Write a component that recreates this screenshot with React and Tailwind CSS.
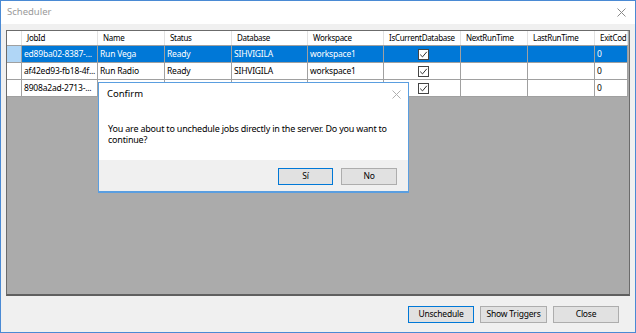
import React from "react";

const cols = [
  { name: "JobId", w: 76 },
  { name: "Name", w: 67 },
  { name: "Status", w: 67 },
  { name: "Database", w: 76 },
  { name: "Workspace", w: 76 },
  { name: "IsCurrentDatabase", w: 77, center: true },
  { name: "NextRunTime", w: 67 },
  { name: "LastRunTime", w: 67 },
  { name: "ExitCod", w: 33 },
];

const rows = [
  ["ed89ba02-8387-...", "Run Vega", "Ready", "SIHVIGILA", "workspace1", true, "", "", "0"],
  ["af42ed93-fb18-4f...", "Run Radio", "Ready", "SIHVIGILA", "workspace1", true, "", "", "0"],
  ["8908a2ad-2713-...", "", "", "", "", true, "", "", "0"],
];

function Check() {
  return (
    <span className="inline-flex w-[11px] h-[11px] border border-[#444] bg-white items-center justify-center">
      <svg width="9" height="9" viewBox="0 0 9 9">
        <path d="M1.2 4.6 L3.5 6.9 L7.8 1.8" fill="none" stroke="#333" strokeWidth="1" />
      </svg>
    </span>
  );
}

function Btn({ children, def, className }) {
  return (
    <div
      className={
        "flex items-center justify-center bg-[#e1e1e1] border text-[8.5px] tracking-[-0.2px] text-black " +
        (def ? "border-[#0078d7] " : "border-[#adadad] ") +
        className
      }
    >
      {children}
    </div>
  );
}

export default function App() {
  return (
    <div
      className="relative w-[636px] h-[333px] border border-[#4a8ad4] flex flex-col bg-[#f0f0f0] overflow-hidden"
      style={{ fontFamily: '"Segoe UI", "Noto Sans", sans-serif' }}
    >
      <div className="h-[23px] bg-white flex items-center justify-between pl-[6px] pr-[9px]">
        <span className="text-[9.5px] text-[#9a9a9a]">Scheduler</span>
        <svg width="9" height="9" viewBox="0 0 9 9">
          <path d="M0.5 0.5 L8.5 8.5 M8.5 0.5 L0.5 8.5" stroke="#8a8a8a" strokeWidth="1" />
        </svg>
      </div>
      <div className="flex-1 flex flex-col px-[5px] pt-[6px]">
        <div className="h-[266px] bg-[#ababab] border border-[#6b6b6b] border-b-2 border-b-[#5f5f5f]">
          <div className="flex h-[15px] bg-white w-fit border-b border-[#a0a0a0]">
            <div className="w-[15px] border-r border-[#e2e2e2]" />
            {cols.map((c) => (
              <div
                key={c.name}
                style={{ width: c.w }}
                className="shrink-0 border-r border-[#e2e2e2] text-[8px] tracking-[-0.3px] leading-[14px] overflow-hidden whitespace-nowrap text-black pl-[5px]"
              >
                {c.name}
              </div>
            ))}
          </div>
          {rows.map((r, i) => {
            const sel = i === 0;
            return (
              <div key={i} className="flex h-[17px] w-fit">
                <div
                  className={
                    "w-[15px] border-r border-b border-[#a0a0a0] " +
                    (sel ? "bg-[#b0d6f6]" : "bg-white")
                  }
                />
                {cols.map((c, j) => (
                  <div
                    key={j}
                    style={{ width: c.w }}
                    className={
                      "shrink-0 border-r border-b border-[#a0a0a0] text-[8.5px] tracking-[-0.2px] leading-[16px] pl-[2px] overflow-hidden whitespace-nowrap flex items-center " +
                      (sel ? "bg-[#0078d7] text-white " : "bg-white text-black ") +
                      (c.center ? "justify-center" : "")
                    }
                  >
                    {typeof r[j] === "boolean" ? <Check /> : r[j]}
                  </div>
                ))}
              </div>
            );
          })}
        </div>
        <div className="flex justify-end gap-[6px] pt-[10px] pr-[11px]">
          <Btn def className="w-[66px] h-[17px]">Unschedule</Btn>
          <Btn className="w-[67px] h-[17px]">Show Triggers</Btn>
          <Btn className="w-[66px] h-[17px]">Close</Btn>
        </div>
      </div>

      <div className="absolute left-[97px] top-[81px] w-[311px] h-[111px] border border-[#5a9ee0] border-b-2 bg-white flex flex-col">
        <div className="h-[22px] flex items-center justify-between pl-[8px] pr-[7px]">
          <span className="text-[9.5px] text-black">Confirm</span>
          <svg width="9" height="9" viewBox="0 0 9 9">
            <path d="M0.5 0.5 L8.5 8.5 M8.5 0.5 L0.5 8.5" stroke="#b0b0b0" strokeWidth="1" />
          </svg>
        </div>
        <div className="h-[55px] pl-[9px] pt-[18px] text-[9px] tracking-[-0.2px] text-black whitespace-nowrap flex flex-col">
          <div className="h-[11px] leading-[11px]">
            You are about to unchedule jobs directly in the server. Do you want to
          </div>
          <div className="h-[11px] leading-[11px]">continue?</div>
        </div>
        <div className="flex-1 bg-[#f0f0f0] flex justify-end gap-[8px] pt-[8px] pr-[11px]">
          <Btn def className="w-[55px] h-[17px]">Sí</Btn>
          <Btn className="w-[56px] h-[17px]">No</Btn>
        </div>
      </div>
    </div>
  );
}
